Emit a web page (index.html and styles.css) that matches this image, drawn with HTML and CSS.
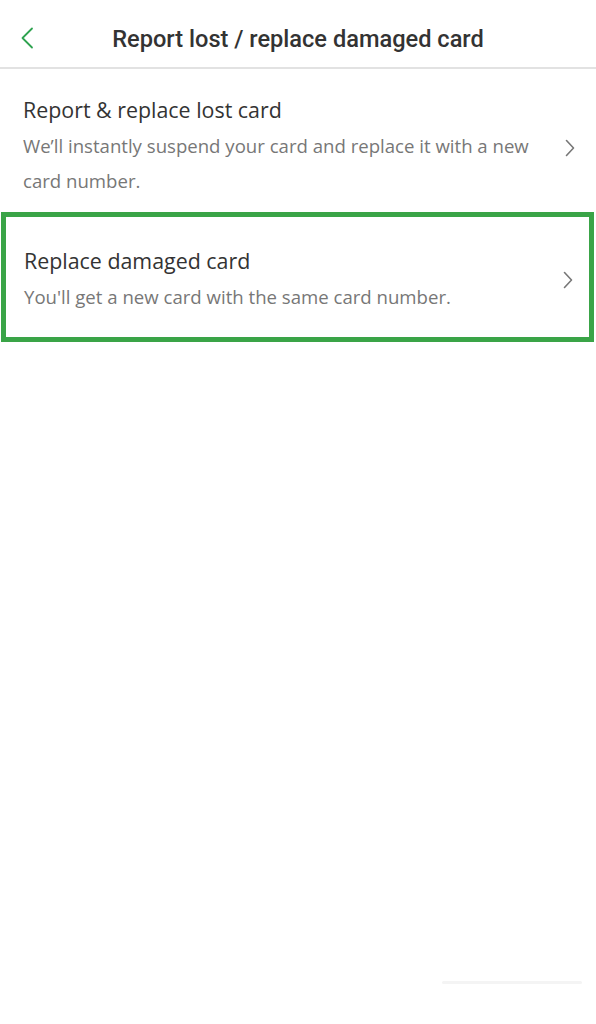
FILE: index.html
```html
<!DOCTYPE html>
<html lang="en">
<head>
<meta charset="utf-8">
<title>Report lost / replace damaged card</title>
<link rel="stylesheet" href="styles.css">
</head>
<body>
<div class="screen">
  <header class="topbar">
    <button class="back" aria-label="Back">
      <svg width="14" height="22" viewBox="0 0 14 22"><path d="M12 1.5 L2.5 11 L12 20.5" fill="none" stroke="#2fa350" stroke-width="1.8" stroke-linecap="round" stroke-linejoin="round"/></svg>
    </button>
    <h1 class="title">Report lost / replace damaged card</h1>
  </header>
  <ul class="options">
    <li class="option option-lost">
      <div class="option-text">
        <div class="option-title">Report &amp; replace lost card</div>
        <div class="option-desc">We’ll instantly suspend your card and replace it with a new card number.</div>
      </div>
      <svg class="chev" width="10" height="18" viewBox="0 0 10 18"><path d="M1.5 1.5 L8.5 9 L1.5 16.5" fill="none" stroke="#777" stroke-width="1.6" stroke-linecap="round" stroke-linejoin="round"/></svg>
    </li>
    <li class="option option-damaged">
      <div class="option-text">
        <div class="option-title">Replace damaged card</div>
        <div class="option-desc">You'll get a new card with the same card number.</div>
      </div>
      <svg class="chev" width="10" height="18" viewBox="0 0 10 18"><path d="M1.5 1.5 L8.5 9 L1.5 16.5" fill="none" stroke="#777" stroke-width="1.6" stroke-linecap="round" stroke-linejoin="round"/></svg>
    </li>
  </ul>
  <div class="home-indicator"></div>
</div>
</body>
</html>
```

FILE: styles.css
```css
* { box-sizing: border-box; }
html, body { margin: 0; padding: 0; background: #fff; }
body { font-family: "Open Sans", "Noto Sans", sans-serif; color: #333; }
.screen { position: relative; width: 596px; height: 1024px; overflow: hidden; }

.topbar {
  height: 69px;
  display: flex;
  align-items: center;
  justify-content: center;
  position: relative;
  border-bottom: 2px solid #e2e2e2;
}
.back {
  position: absolute;
  left: 20px;
  top: 27px;
  padding: 0;
  border: 0;
  background: none;
  display: flex;
}
.title {
  margin: 0;
  font-family: Roboto, "Liberation Sans", sans-serif;
  font-weight: 500;
  font-size: 23.6px;
  color: #333;
  letter-spacing: 0;
  padding-top: 10px;
}

.options { list-style: none; margin: 0; padding: 0; }
.option {
  display: flex;
  align-items: center;
  justify-content: space-between;
  padding-left: 23px;
  padding-right: 21px;
}
.option-lost { padding-top: 25px; padding-bottom: 14px; }
.option-lost .chev { margin-top: 3px; }
.option-damaged {
  border: 5px solid #3aa447;
  margin: 0 2px 0 1px;
  padding: 28px 16px 23px 18px;
}
.option-text { flex: 1; padding-right: 22px; }
.option-title {
  font-size: 21.4px;
  line-height: 31px;
  color: #333;
}
.option-desc {
  margin-top: 3px;
  font-size: 18.6px;
  line-height: 35px;
  color: #777;
}
.chev { flex: none; }

.home-indicator {
  position: absolute;
  left: 442px;
  top: 981px;
  width: 140px;
  height: 3px;
  border-radius: 2px;
  background: #f4f4f4;
}
```
